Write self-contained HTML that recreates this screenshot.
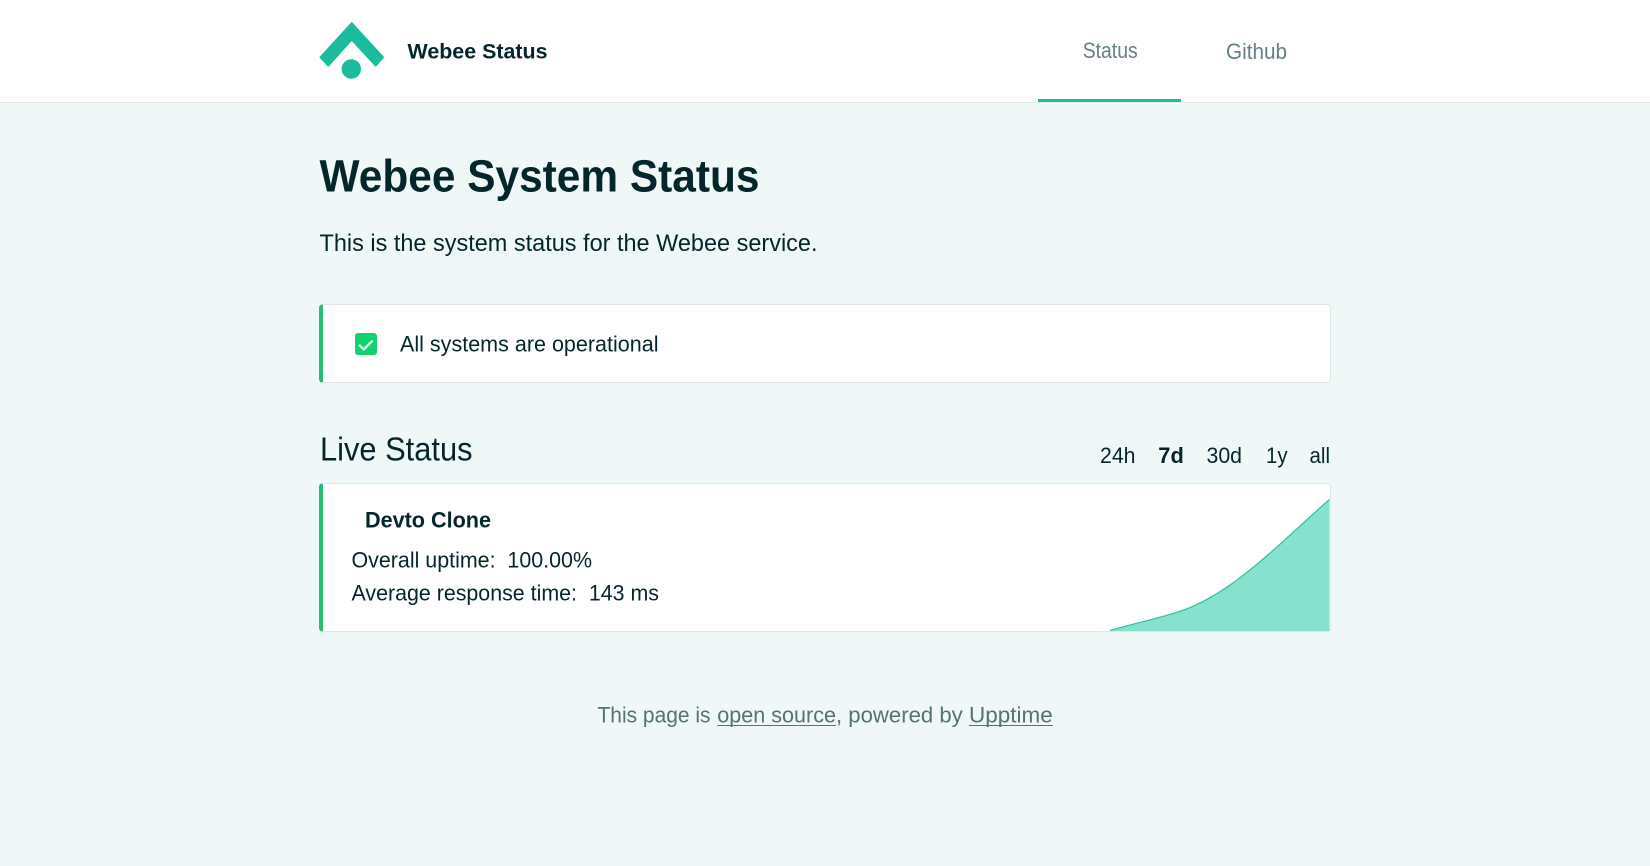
<!DOCTYPE html>
<html lang="en">
<head>
<meta charset="utf-8">
<title>Webee Status</title>
<style>
html,body{margin:0;padding:0;width:1650px;height:866px;overflow:hidden;background:#eff7f7}
body{position:relative;font-family:"Liberation Sans",sans-serif}
header{position:absolute;left:0;top:0;width:1650px;height:102px;background:#fff;border-bottom:1px solid #dcebe8;box-sizing:content-box}
.tab{position:absolute;left:1038px;top:99px;width:143px;height:3px;background:#1abc9c}
.box{position:absolute;left:319px;width:1012px;background:#fff;border:1px solid #dde9e8;border-left:4px solid #20c070;border-radius:4px;box-sizing:border-box}
.b1{top:304px;height:79px}
.b2{top:483px;height:149px}
svg.o{position:absolute;left:0;top:0}
text{font-family:"Liberation Sans",sans-serif;fill:#04262b;white-space:pre}
.b{font-weight:700}
.n{font-size:22px}
.l{fill:#667f85;font-size:22px}
.f{fill:#55736f;font-size:22px}
</style>
</head>
<body>
<header><div class="tab"></div></header>
<div class="box b1"></div>
<div class="box b2"></div>
<svg class="o" width="1650" height="866" viewBox="0 0 1650 866" xmlns="http://www.w3.org/2000/svg">
  <path d="M351.7 21.7L384.3 57.3L375.7 67L351.7 41L328.3 67L319.3 57.3Z" fill="#1abc9c"/>
  <circle cx="351.3" cy="69" r="9.7" fill="#1abc9c"/>
  <text class="b" x="407.5" y="58.5" font-size="21" textLength="140" lengthAdjust="spacingAndGlyphs">Webee Status</text>
  <text class="l" x="1082.7" y="58" textLength="55" lengthAdjust="spacingAndGlyphs">Status</text>
  <text class="l" x="1226" y="59" textLength="61" lengthAdjust="spacingAndGlyphs">Github</text>

  <text class="b" x="319.5" y="191.5" font-size="45" textLength="440" lengthAdjust="spacingAndGlyphs">Webee System Status</text>
  <text x="319.5" y="251" font-size="24" textLength="498" lengthAdjust="spacingAndGlyphs">This is the system status for the Webee service.</text>

  <rect x="355" y="333" width="22" height="22" rx="3" fill="#12d26c"/>
  <path d="M359 344.8L363.8 349.4L372.6 340.6" fill="none" stroke="#fff" stroke-width="2.2"/>
  <text class="n" x="400" y="351.5" textLength="258.5" lengthAdjust="spacingAndGlyphs">All systems are operational</text>

  <text x="320" y="460.5" font-size="33" textLength="152.5" lengthAdjust="spacingAndGlyphs">Live Status</text>
  <text class="n" x="1100" y="463" textLength="35.5" lengthAdjust="spacingAndGlyphs">24h</text>
  <text class="n b" x="1158.3" y="463" textLength="25.5" lengthAdjust="spacingAndGlyphs">7d</text>
  <text class="n" x="1206.5" y="463" textLength="35.5" lengthAdjust="spacingAndGlyphs">30d</text>
  <text class="n" x="1266" y="463" textLength="21.5" lengthAdjust="spacingAndGlyphs">1y</text>
  <text class="n" x="1309.5" y="463" textLength="20.5" lengthAdjust="spacingAndGlyphs">all</text>

  <text class="n b" x="365" y="527.5" textLength="126" lengthAdjust="spacingAndGlyphs">Devto Clone</text>
  <text class="n" x="351.5" y="567.5" textLength="240.5" lengthAdjust="spacingAndGlyphs">Overall uptime:  100.00%</text>
  <text class="n" x="351.5" y="600.5" textLength="307.5" lengthAdjust="spacingAndGlyphs">Average response time:  143 ms</text>

  <path d="M1110 630.5C1130 624.5 1157 618.8 1180 611.3C1235 593 1285 537.5 1329.5 499.5V631H1110Z" fill="#88e1cd"/>
  <path d="M1110 630.5C1130 624.5 1157 618.8 1180 611.3C1235 593 1285 537.5 1329.5 499.5" fill="none" stroke="#2cc3a4" stroke-width="1.2"/>

  <text class="f" x="597.5" y="722.5" textLength="113" lengthAdjust="spacingAndGlyphs">This page is</text>
  <text class="f" x="717.3" y="722.5" textLength="118.7" lengthAdjust="spacingAndGlyphs">open source</text>
  <rect x="717.3" y="725" width="118.7" height="1" fill="#55736f"/>
  <text class="f" x="836" y="722.5" textLength="126.7" lengthAdjust="spacingAndGlyphs">, powered by</text>
  <text class="f" x="969" y="722.5" textLength="83.7" lengthAdjust="spacingAndGlyphs">Upptime</text>
  <rect x="969" y="725" width="83.7" height="1" fill="#55736f"/>
</svg>
</body>
</html>
